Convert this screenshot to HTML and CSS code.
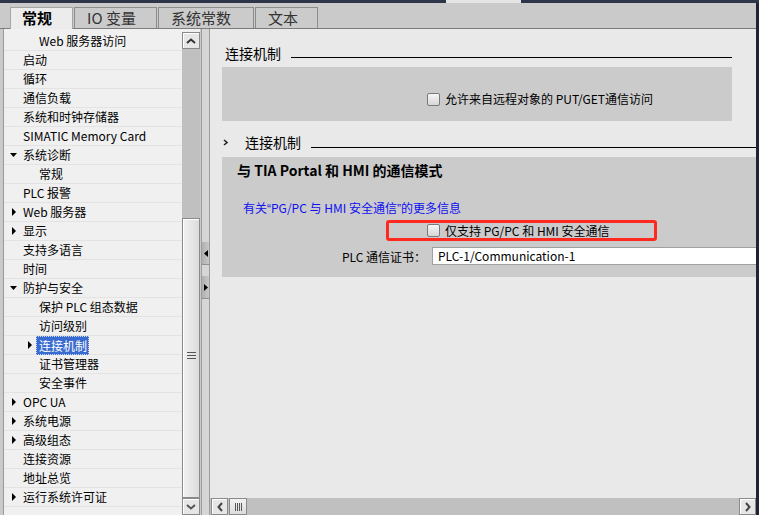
FILE: index.html
```html
<!DOCTYPE html>
<html lang="zh-CN">
<head>
    <meta charset="UTF-8">
    <title>属性 - 连接机制</title>
    <link rel="stylesheet" href="styles.css">
</head>
<body>
    <div class="topline"><span class="topline-gap"></span><span class="topline-lit"></span></div>

    <div class="frame">
        <div class="main">
            <div class="tabbar">
                <div class="tab active tab-general">常规</div>
                <div class="tab tab-io">IO 变量</div>
                <div class="tab tab-const">系统常数</div>
                <div class="tab tab-text">文本</div>
            </div>

            <div class="workspace">
                <div class="navpane">
                    <ul class="tree">
                        <li class="lv2"><span class="tw"></span><span class="lbl">Web 服务器访问</span></li>
                        <li><span class="tw"></span><span class="lbl">启动</span></li>
                        <li><span class="tw"></span><span class="lbl">循环</span></li>
                        <li><span class="tw"></span><span class="lbl">通信负载</span></li>
                        <li><span class="tw"></span><span class="lbl">系统和时钟存储器</span></li>
                        <li><span class="tw"></span><span class="lbl">SIMATIC Memory Card</span></li>
                        <li><span class="tw"><svg width="7" height="4" viewBox="0 0 7 4"><path d="M0 0H7L3.5 4Z"/></svg></span><span class="lbl">系统诊断</span></li>
                        <li class="lv2"><span class="tw"></span><span class="lbl">常规</span></li>
                        <li><span class="tw"></span><span class="lbl">PLC 报警</span></li>
                        <li><span class="tw"><svg width="4" height="8" viewBox="0 0 4 8"><path d="M0 0L4 4L0 8Z"/></svg></span><span class="lbl">Web 服务器</span></li>
                        <li><span class="tw"><svg width="4" height="8" viewBox="0 0 4 8"><path d="M0 0L4 4L0 8Z"/></svg></span><span class="lbl">显示</span></li>
                        <li><span class="tw"></span><span class="lbl">支持多语言</span></li>
                        <li><span class="tw"></span><span class="lbl">时间</span></li>
                        <li><span class="tw"><svg width="7" height="4" viewBox="0 0 7 4"><path d="M0 0H7L3.5 4Z"/></svg></span><span class="lbl">防护与安全</span></li>
                        <li class="lv2"><span class="tw"></span><span class="lbl">保护 PLC 组态数据</span></li>
                        <li class="lv2"><span class="tw"></span><span class="lbl">访问级别</span></li>
                        <li class="lv2"><span class="tw"><svg width="4" height="8" viewBox="0 0 4 8"><path d="M0 0L4 4L0 8Z"/></svg></span><span class="lbl selected">连接机制</span></li>
                        <li class="lv2"><span class="tw"></span><span class="lbl">证书管理器</span></li>
                        <li class="lv2"><span class="tw"></span><span class="lbl">安全事件</span></li>
                        <li><span class="tw"><svg width="4" height="8" viewBox="0 0 4 8"><path d="M0 0L4 4L0 8Z"/></svg></span><span class="lbl">OPC UA</span></li>
                        <li><span class="tw"><svg width="4" height="8" viewBox="0 0 4 8"><path d="M0 0L4 4L0 8Z"/></svg></span><span class="lbl">系统电源</span></li>
                        <li><span class="tw"><svg width="4" height="8" viewBox="0 0 4 8"><path d="M0 0L4 4L0 8Z"/></svg></span><span class="lbl">高级组态</span></li>
                        <li><span class="tw"></span><span class="lbl">连接资源</span></li>
                        <li><span class="tw"></span><span class="lbl">地址总览</span></li>
                        <li><span class="tw"><svg width="4" height="8" viewBox="0 0 4 8"><path d="M0 0L4 4L0 8Z"/></svg></span><span class="lbl">运行系统许可证</span></li>
                    </ul>

                    <div class="vscroll">
                        <div class="sbtn">
                            <svg width="10" height="6" viewBox="0 0 10 6"><path d="M1 5L5 1.5L9 5" fill="none" stroke="#333" stroke-width="2"/></svg>
                        </div>
                        <div class="vtrack">
                            <div class="vthumb"><span class="grip"></span></div>
                        </div>
                        <div class="sbtn">
                            <svg width="10" height="6" viewBox="0 0 10 6"><path d="M1 1L5 4.5L9 1" fill="none" stroke="#555" stroke-width="2"/></svg>
                        </div>
                    </div>
                </div>

                <div class="splitter">
                    <div class="split-btn"><svg width="4" height="7" viewBox="0 0 4 7"><path d="M4 0V7L0 3.5Z"/></svg></div>
                    <div class="split-btn"><svg width="4" height="7" viewBox="0 0 4 7"><path d="M0 0V7L4 3.5Z"/></svg></div>
                </div>

                <div class="content">
                    <div class="content-body">
                        <div class="section-head">
                            <span class="section-title">连接机制</span>
                            <span class="section-rule"></span>
                        </div>
                        <div class="group group-put">
                            <div class="check-row">
                                <span class="checkbox"></span>
                                <span>允许来自远程对象的 PUT/GET通信访问</span>
                            </div>
                        </div>

                        <div class="section-head wide">
                            <span class="chevron"><svg width="5" height="7" viewBox="0 0 5 7"><path d="M1 1L4 3.5L1 6" fill="none" stroke="#222" stroke-width="1.6"/></svg></span>
                            <span class="section-title">连接机制</span>
                            <span class="section-rule"></span>
                        </div>
                        <div class="group group-mode">
                            <div class="group-title">与 TIA Portal 和 HMI 的通信模式</div>
                            <div class="info-link">有关<span class="q">“</span>PG/PC 与 HMI 安全通信<span class="q">”</span>的更多信息</div>
                            <div class="check-row marked">
                                <span class="checkbox"></span>
                                <span>仅支持 PG/PC 和 HMI 安全通信</span>
                            </div>
                            <div class="field-row">
                                <span class="field-label">PLC 通信证书：</span>
                                <span class="field-input">PLC-1/Communication-1</span>
                            </div>
                        </div>
                    </div>

                    <div class="hscroll">
                        <div class="hbtn"><svg width="6" height="10" viewBox="0 0 6 10"><path d="M5 1L1.5 5L5 9" fill="none" stroke="#444" stroke-width="2"/></svg></div>
                        <div class="hthumb"><span class="hgrip"></span></div>
                        <div class="hspace"></div>
                        <div class="hbtn"><svg width="6" height="10" viewBox="0 0 6 10"><path d="M1 1L4.5 5L1 9" fill="none" stroke="#444" stroke-width="2"/></svg></div>
                    </div>
                </div>
            </div>
        </div>
        <div class="edge"></div>
    </div>
</body>
</html>
```

FILE: styles.css
```css
body {
    margin: 0;
    width: 759px;
    height: 515px;
    overflow: hidden;
    font-family: "Noto Sans CJK SC", "Open Sans", sans-serif;
    background-color: #1f2433;
    color: #000;
}

.topline {
    height: 3px;
    display: flex;
    background-color: #2e3548;
}

.topline-gap {
    width: 446px;
}

.topline-lit {
    width: 75px;
    background-color: #e4e4e4;
}

.frame {
    display: flex;
    height: 512px;
}

.main {
    width: 756px;
    display: flex;
    flex-direction: column;
    background-color: #cacaca;
}

.edge {
    width: 3px;
    background-color: #1f2433;
}

/* tabs */

.tabbar {
    height: 25px;
    display: flex;
    align-items: flex-end;
    padding-left: 10px;
    background-color: #cacaca;
    border-bottom: 1px solid #7d7d7d;
}

.tab {
    box-sizing: border-box;
    height: 21px;
    line-height: 20px;
    padding-left: 12px;
    margin-right: 1px;
    font-size: 15px;
    color: #333;
    white-space: nowrap;
    background-color: #cbcbcb;
    border: 1px solid #8c8c8c;
    border-bottom: none;
}

.tab.active {
    height: 22px;
    margin-bottom: -1px;
    padding-left: 11px;
    font-weight: bold;
    color: #000;
    background-color: #ececec;
    border-color: #a5a5a5;
}

.tab-general { width: 63px; }
.tab-io { width: 83px; }
.tab-const { width: 96px; }
.tab-text { width: 63px; }

/* left navigation */

.workspace {
    flex: 1;
    display: flex;
    min-height: 0;
}

.navpane {
    width: 201px;
    display: flex;
    padding-left: 3px;
    box-sizing: border-box;
    background-color: #cacaca;
}

.tree {
    width: 178px;
    margin: 0;
    padding: 3px 0 0 0;
    list-style: none;
    background-color: #f0f0f0;
    border-left: 1px solid #9a9a9a;
}

.tree li {
    height: 18px;
    display: flex;
    align-items: center;
    font-size: 12px;
    line-height: 18px;
    white-space: nowrap;
    border-bottom: 1px solid #e3e3e3;
}

.tree li.lv2 {
    padding-left: 16px;
}

.tw {
    width: 19px;
    flex-shrink: 0;
    display: flex;
    justify-content: center;
    align-items: center;
}

.tw svg {
    fill: #000;
}

.lbl.selected {
    margin-left: -3px;
    padding: 0 1px 0 2px;
    line-height: 17px;
    color: #fff;
    background-color: #3a6bd0;
    border: 1px dotted #c9d8f5;
}

.vscroll {
    width: 18px;
    display: flex;
    flex-direction: column;
    padding-top: 3px;
    background-color: #f0f0f0;
}

.sbtn {
    height: 16px;
    display: flex;
    justify-content: center;
    align-items: center;
    background-color: #e6e6e6;
    border: 1px solid #8a8a8a;
    box-shadow: inset 1px 1px 0 #fff;
}

.vtrack {
    flex: 1;
    background-color: #c0c0c0;
    padding-top: 169px;
}

.vthumb {
    height: 276px;
    display: flex;
    justify-content: center;
    align-items: flex-end;
    padding-bottom: 2px;
    background: linear-gradient(to right, #f2f2f2, #dcdcdc);
    border: 1px solid #8a8a8a;
    box-shadow: inset 1px 1px 0 #fff;
}

.grip {
    width: 9px;
    height: 5px;
    margin-bottom: 136px;
    border-top: 1px solid #555;
    border-bottom: 1px solid #555;
    background: linear-gradient(#555, #555) center / 100% 1px no-repeat;
}

/* splitter between the panes */

.splitter {
    width: 7px;
    padding-top: 213px;
    background-color: #d6d6d6;
    border-left: 1px solid #9c9c9c;
    border-right: 1px solid #9c9c9c;
}

.split-btn {
    height: 22px;
    margin-bottom: 11px;
    display: flex;
    justify-content: center;
    align-items: center;
    background: linear-gradient(to right, #b0b0b0, #c8c8c8);
    border-bottom: 1px solid #909090;
}

.split-btn svg {
    fill: #000;
}

/* property content */

.content {
    flex: 1;
    display: flex;
    flex-direction: column;
    overflow: hidden;
    background-color: #e9e9e9;
}

.content-body {
    flex: 1;
    padding: 15px 0 0 12px;
    overflow: hidden;
}

.section-head {
    width: 510px;
    height: 18px;
    display: flex;
    align-items: flex-start;
    font-size: 14px;
    line-height: 18px;
}

.section-head.wide {
    width: 560px;
    margin-top: 12px;
}

.section-title {
    padding-left: 3px;
    white-space: nowrap;
}

.section-rule {
    flex: 1;
    height: 1px;
    margin: 13px 0 0 10px;
    background-color: #000;
}

.wide .section-rule {
    margin-top: 14px;
}

.wide .section-title {
    padding-left: 0;
}

.chevron {
    width: 23px;
    height: 18px;
    display: flex;
    align-items: center;
    padding-left: 1px;
    box-sizing: border-box;
}

.group {
    background-color: #cbcbcb;
    font-size: 12px;
}

.group-put {
    width: 510px;
    height: 54px;
    margin-top: 5px;
    padding: 24px 0 0 205px;
    box-sizing: border-box;
}

.check-row {
    display: flex;
    align-items: center;
    height: 16px;
    line-height: 16px;
    white-space: nowrap;
}

.checkbox {
    width: 11px;
    height: 11px;
    margin-right: 5px;
    border: 1px solid #7a7a7a;
    border-radius: 2px;
    background: linear-gradient(#f6f6f6, #d6d6d6);
}

.group-mode {
    width: 560px;
    height: 120px;
    margin-top: 6px;
    padding: 3px 0 0 15px;
    box-sizing: border-box;
}

.group-title {
    font-size: 14px;
    font-weight: bold;
    line-height: 20px;
}

.info-link {
    margin: 20px 0 0 6px;
    line-height: 16px;
    color: #1010f0;
}

.info-link .q {
    font-family: "Liberation Sans", sans-serif;
}

.check-row.marked {
    box-sizing: border-box;
    width: 271px;
    height: 21px;
    margin: 3px 0 0 149px;
    padding-left: 38px;
    border: 3px solid #ff2a1f;
    border-radius: 3px;
}

.field-row {
    display: flex;
    align-items: center;
    margin: 6px 0 0 -15px;
    height: 18px;
}

.field-label {
    width: 204px;
    text-align: right;
    white-space: nowrap;
}

.field-input {
    flex: 1;
    height: 16px;
    margin-left: 6px;
    padding-left: 5px;
    line-height: 16px;
    background-color: #fff;
    border-top: 1px solid #a0a0a0;
    border-bottom: 1px solid #a0a0a0;
    border-left: 1px solid #a0a0a0;
}

.hscroll {
    height: 17px;
    display: flex;
    padding-left: 1px;
    background-color: #c0c0c0;
}

.hbtn {
    width: 15px;
    display: flex;
    justify-content: center;
    align-items: center;
    background-color: #e6e6e6;
    border: 1px solid #8a8a8a;
    box-shadow: inset 1px 1px 0 #fff;
}

.hthumb {
    width: 16px;
    margin-left: 1px;
    display: flex;
    justify-content: center;
    align-items: center;
    background: linear-gradient(#f2f2f2, #dcdcdc);
    border: 1px solid #8a8a8a;
}

.hgrip {
    width: 7px;
    height: 8px;
    background: repeating-linear-gradient(to right, #555 0 1px, transparent 1px 2px);
}

.hspace {
    flex: 1;
}
```
